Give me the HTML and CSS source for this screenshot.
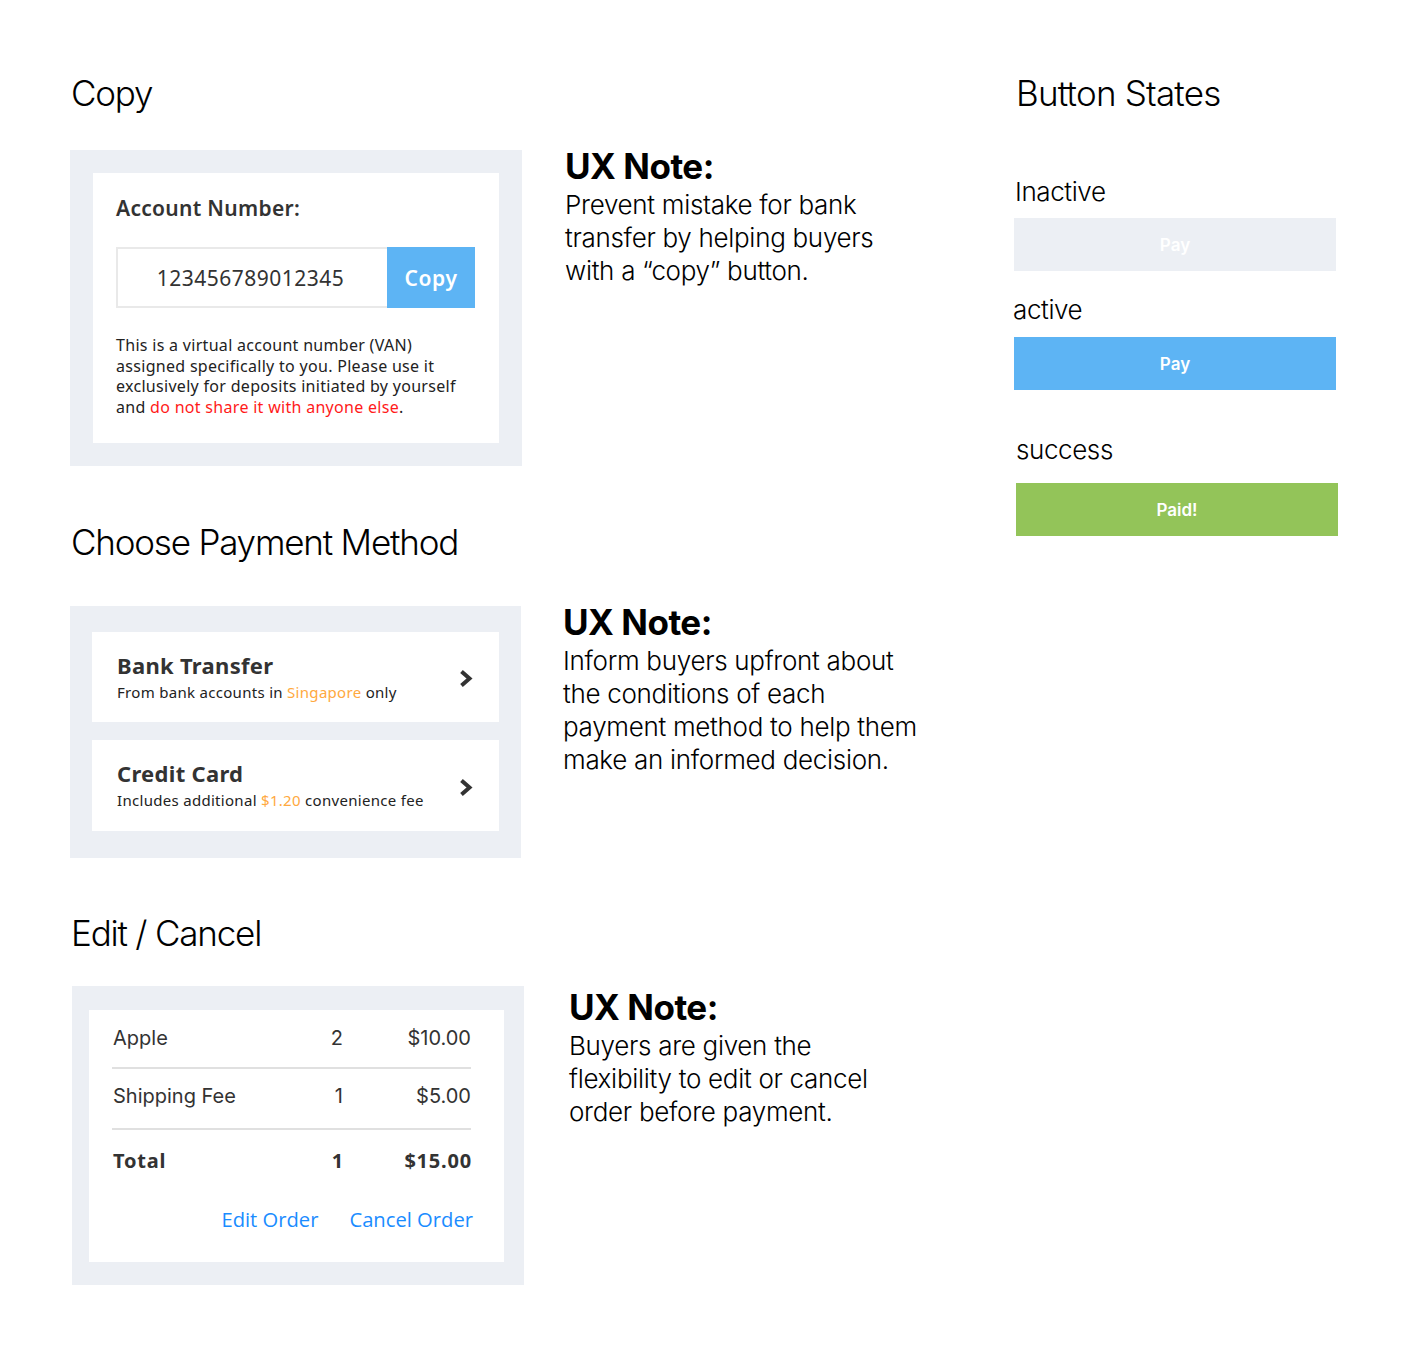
FILE: index.html
```html
<!DOCTYPE html>
<html lang="en">
<head>
<meta charset="utf-8">
<title>Payment UX</title>
<link rel="stylesheet" href="styles.css">
</head>
<body>
<div class="page">
  <div class="main">
    <section class="sec">
      <h2 class="title">Copy</h2>
      <div class="row row-copy">
        <div class="panel panel-copy">
          <div class="sheet sheet-copy">
            <div class="acc-label">Account Number:</div>
            <div class="acc-field">
              <div class="acc-number">123456789012345</div>
              <div class="acc-btn">Copy</div>
            </div>
            <p class="acc-text">This is a virtual account number (VAN) assigned specifically to you. Please use it exclusively for deposits initiated by yourself and <span class="warn">do not share it with anyone else</span>.</p>
          </div>
        </div>
        <div class="note note-1">
          <div class="note-title">UX Note:</div>
          <p class="note-body">Prevent mistake for bank<br>transfer by helping buyers<br>with a “copy” button.</p>
        </div>
      </div>
    </section>

    <section class="sec sec-2">
      <h2 class="title">Choose Payment Method</h2>
      <div class="row row-pay">
        <div class="panel panel-pay">
          <div class="method">
            <div class="method-info">
              <div class="method-name">Bank Transfer</div>
              <div class="method-desc">From bank accounts in <span class="hl">Singapore</span> only</div>
            </div>
            <svg class="chev" width="14" height="19" viewBox="0 0 14 19"><path d="M2.5 2.5 L10.5 9.5 L2.5 16.5" fill="none" stroke="#333" stroke-width="4" stroke-linejoin="miter"/></svg>
          </div>
          <div class="method">
            <div class="method-info">
              <div class="method-name">Credit Card</div>
              <div class="method-desc">Includes additional <span class="hl">$1.20</span> convenience fee</div>
            </div>
            <svg class="chev" width="14" height="19" viewBox="0 0 14 19"><path d="M2.5 2.5 L10.5 9.5 L2.5 16.5" fill="none" stroke="#333" stroke-width="4" stroke-linejoin="miter"/></svg>
          </div>
        </div>
        <div class="note note-2">
          <div class="note-title">UX Note:</div>
          <p class="note-body">Inform buyers upfront about<br>the conditions of each<br>payment method to help them<br>make an informed decision.</p>
        </div>
      </div>
    </section>

    <section class="sec sec-3">
      <h2 class="title">Edit / Cancel</h2>
      <div class="row row-edit">
        <div class="panel panel-edit">
          <div class="sheet sheet-edit">
            <div class="line-item">
              <span class="li-name">Apple</span><span class="li-qty">2</span><span class="li-price">$10.00</span>
            </div>
            <div class="line-item">
              <span class="li-name">Shipping Fee</span><span class="li-qty">1</span><span class="li-price">$5.00</span>
            </div>
            <div class="line-item total">
              <span class="li-name">Total</span><span class="li-qty">1</span><span class="li-price">$15.00</span>
            </div>
            <div class="actions">
              <a class="link">Edit Order</a>
              <a class="link">Cancel Order</a>
            </div>
          </div>
        </div>
        <div class="note note-3">
          <div class="note-title">UX Note:</div>
          <p class="note-body">Buyers are given the<br>flexibility to edit or cancel<br>order before payment.</p>
        </div>
      </div>
    </section>
  </div>

  <aside class="states">
    <h2 class="title title-states">Button States</h2>
    <div class="state-label lbl-inactive">Inactive</div>
    <div class="btn btn-inactive">Pay</div>
    <div class="state-label lbl-active">active</div>
    <div class="btn btn-active">Pay</div>
    <div class="state-label lbl-success">success</div>
    <div class="btn btn-success">Paid!</div>
  </aside>
</div>
</body>
</html>
```

FILE: styles.css
```css
* { box-sizing: border-box; }
html, body { margin: 0; padding: 0; background: #fff; }
body { font-family: Inter, "Liberation Sans", sans-serif; color: #000; }

.page {
  display: flex;
  padding: 71px 0 0 70px;
  width: 1428px;
  height: 1363px;
}
.main { width: 944px; flex: none; }
.states { width: 330px; flex: none; }

.title {
  margin: 0;
  font-family: Inter, sans-serif;
  font-weight: 300;
  font-size: 35px;
  line-height: 44px;
  letter-spacing: -1.2px;
  padding-left: 1px;
  color: #000;
}

.row { display: flex; align-items: flex-start; }
.row-copy { margin-top: 35px; }
.sec-2 { margin-top: 54px; }
.row-pay { margin-top: 42px; }
.sec-3 { margin-top: 53px; }
.row-edit { margin-top: 31px; }

.panel { background: #ECEFF4; width: 452px; flex: none; }
.sheet { background: #fff; }

/* Copy card */
.panel-copy { padding: 23px; }
.sheet-copy { padding: 23px 23px 25px 23px; font-family: "Noto Sans", sans-serif; color: #333; }
.acc-label { font-size: 21px; font-weight: 600; line-height: 24px; letter-spacing: 0.3px; color: #333; }
.acc-field { display: flex; margin-top: 27px; height: 61px; width: 359px; }
.acc-number {
  flex: 1;
  border: 2px solid #E9E9E9;
  border-right: none;
  display: flex; align-items: center; justify-content: center;
  font-size: 21px; letter-spacing: 0.5px; color: #333;
  padding-right: 4px;
}
.acc-btn {
  width: 88px;
  background: #5DB4F4;
  color: #fff;
  font-size: 21px; font-weight: 600; letter-spacing: 0.6px;
  display: flex; align-items: center; justify-content: center;
}
.acc-text { margin: 27px 0 0; font-size: 16px; line-height: 20.7px; letter-spacing: 0.3px; color: #222; }
.warn { color: #FF1A1A; }

/* Payment method card */
.panel-pay { padding: 26px 22px 27px 22px; width: 451px; }
.method {
  background: #fff;
  height: 90px;
  display: flex; align-items: center; justify-content: space-between;
  padding: 0 26px 0 25px;
  font-family: "Noto Sans", sans-serif;
}
.method + .method { margin-top: 18px; height: 91px; }
.method-name { font-size: 22px; font-weight: 700; line-height: 26px; color: #333; letter-spacing: 0.3px; }
.method-desc { font-size: 15px; line-height: 20px; margin-top: 4px; letter-spacing: 0.3px; color: #222; }
.hl { color: #FFA940; }
.chev { display: block; flex: none; margin-top: 4px; }

/* Edit card */
.panel-edit { padding: 24px 20px 23px 17px; margin-left: 2px; }
.sheet-edit { padding: 0 33px 14px 23px; }
.line-item {
  display: flex; align-items: center;
  height: 59px;
  border-bottom: 2px solid #E0E0E0;
  font-family: Inter, sans-serif;
  font-size: 20px; color: #333;
}
.line-item + .line-item { height: 61px; padding-bottom: 5px; }
.line-item.total { border-bottom: none; height: 60px; padding-bottom: 0; padding-top: 1px; font-family: "Noto Sans", sans-serif; font-weight: 700; font-size: 20px; letter-spacing: 0.8px; }
.li-name { flex: 1; padding-left: 1px; }
.li-qty { width: 40px; text-align: right; }
.li-price { width: 128px; text-align: right; }
.total .li-price { margin-right: -1px; }
.actions {
  display: flex; justify-content: flex-end; gap: 31px;
  height: 58px; align-items: center;
  margin-right: -2px;
}
.link { font-family: "Open Sans", sans-serif; font-size: 20.2px; color: #1A8CFF; text-decoration: none; }

/* Notes */
.note { font-family: Inter, sans-serif; color: #000; }
.note-1 { margin: -4px 0 0 43px; }
.note-2 { margin: -4px 0 0 42px; }
.note-3 { margin: 1px 0 0 45px; }
.note-title { font-size: 35px; font-weight: 700; line-height: 40px; letter-spacing: -0.5px; }
.note-body { margin: 2px 0 0; font-size: 26px; font-weight: 300; line-height: 33px; letter-spacing: -0.3px; }

/* Button states */
.title-states { padding-left: 2px; letter-spacing: -0.8px; }
.state-label { font-family: Inter, sans-serif; font-weight: 300; font-size: 26px; line-height: 33px; letter-spacing: -0.4px; }
.lbl-inactive { margin-top: 60px; padding-left: 1px; }
.lbl-active { margin-top: 22px; padding-left: 0; margin-left: -1px; }
.lbl-success { margin-top: 43px; padding-left: 2px; }
.btn {
  width: 322px; height: 53px;
  display: flex; align-items: center; justify-content: center;
  font-family: Inter, sans-serif; font-weight: 600; font-size: 17px; color: #fff;
}
.btn-inactive { background: #ECEFF4; margin-top: 10px; }
.btn-active { background: #5DB4F4; margin-top: 11px; }
.btn-success { background: #93C459; margin-top: 17px; margin-left: 2px; }
```
